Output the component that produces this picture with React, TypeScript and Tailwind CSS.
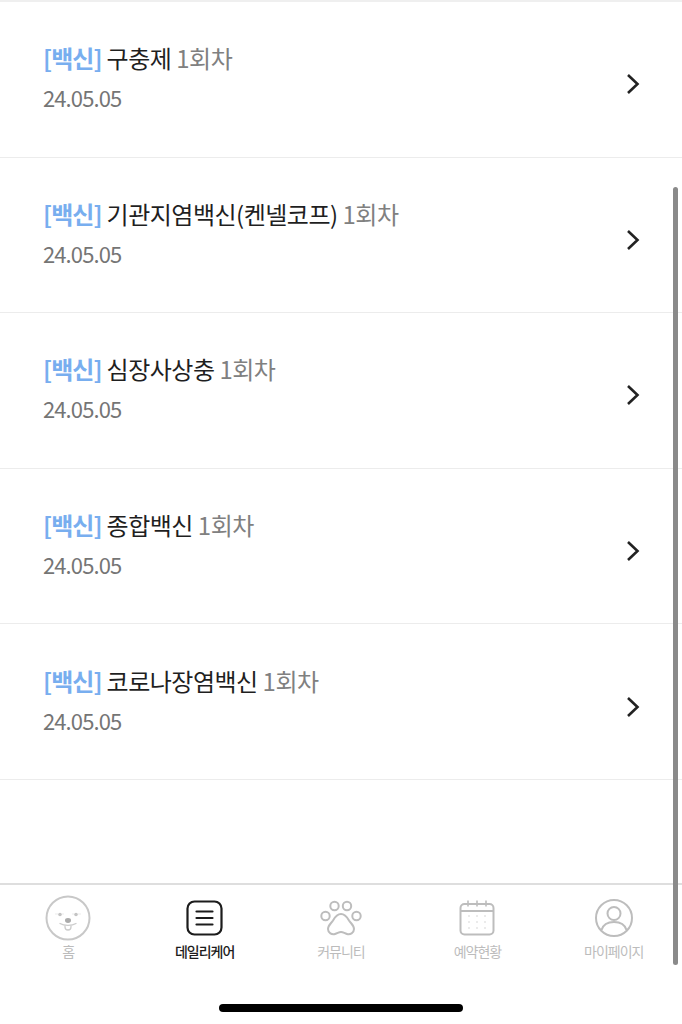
const rows = ["구충제", "기관지염백신(켄넬코프)", "심장사상충", "종합백신", "코로나장염백신"];

function HomeIcon() {
  return (
    <svg width="46" height="46" viewBox="0 0 46 46" fill="none">
      <circle cx="23" cy="23" r="21.500" stroke="#c8c8c8" strokeWidth="2" />
      <circle cx="15" cy="19.500" r="1.800" fill="#c4c4c4" />
      <circle cx="31" cy="19.500" r="1.800" fill="#c4c4c4" />
      <path d="M10 19h3M17 19h2M27 19h2M33 19h3" stroke="#ebebeb" strokeWidth="1" />
      <ellipse cx="23" cy="25.500" rx="3" ry="2.400" fill="#ababab" />
      <path d="M15 28.500c4 2.500 12 2.500 16 0" stroke="#cccccc" strokeWidth="1.300" strokeLinecap="round" />
      <path d="M20 30.500v1.500a3 3 0 0 0 6 0v-1.500" stroke="#cccccc" strokeWidth="1.300" />
    </svg>
  );
}

function CareIcon() {
  return (
    <svg width="38" height="36" viewBox="0 0 38 36" fill="none" stroke="#1c1c1c">
      <rect x="1.500" y="1.500" width="34" height="33" rx="7" strokeWidth="2.200" />
      <path d="M10.500 11.500h16M10.500 18h16M10.500 24.500h16" strokeWidth="2.200" strokeLinecap="round" />
    </svg>
  );
}

function PawIcon() {
  return (
    <svg width="44" height="36" viewBox="0 0 44 36" fill="none" stroke="#bdbdbd" strokeWidth="2">
      <circle cx="6.500" cy="16" r="4.200" />
      <circle cx="15.500" cy="6" r="4.200" />
      <circle cx="28" cy="6" r="4.200" />
      <circle cx="37.500" cy="16" r="4.200" />
      <path d="M22 14c-4 0-6 3-8 6.500-2 3-5 5-5 8.500 0 4 4 6 7 5 3-1 4-2 6-2s3 1 6 2c3 1 7-1 7-5 0-3.500-3-5.500-5-8.500-2-3.500-4-6.500-8-6.500z" />
    </svg>
  );
}

function CalendarIcon() {
  const dots = [];
  for (let y = 16; y <= 28; y += 6) {
    for (let x = 10; x <= 26; x += 8) {
      dots.push(<circle key={`${x}-${y}`} cx={x} cy={y} r="0.800" fill="#d2d2d2" stroke="none" />);
    }
  }
  return (
    <svg width="36" height="36" viewBox="0 0 36 36" fill="none" stroke="#bdbdbd" strokeWidth="2">
      <rect x="1.500" y="4" width="33" height="30.500" rx="4" />
      <path d="M1.500 11h33" />
      <path d="M9 0.500v6M18 0.500v6M27 0.500v6" strokeWidth="1.600" />
      {dots}
    </svg>
  );
}

function MyIcon() {
  return (
    <svg width="40" height="40" viewBox="0 0 40 40" fill="none" stroke="#bdbdbd" strokeWidth="2">
      <circle cx="20" cy="20" r="18" />
      <circle cx="20" cy="15.500" r="6.500" />
      <path d="M7.500 32c1.500-5 6-8 12.500-8s11 3 12.500 8" />
    </svg>
  );
}

const tabs = [
  { label: "홈", icon: <HomeIcon />, active: false },
  { label: "데일리케어", icon: <CareIcon />, active: true },
  { label: "커뮤니티", icon: <PawIcon />, active: false },
  { label: "예약현황", icon: <CalendarIcon />, active: false },
  { label: "마이페이지", icon: <MyIcon />, active: false },
];

export default function App() {
  return (
    <div className="relative flex h-[1024px] w-[682px] flex-col overflow-hidden bg-white font-['Noto_Sans_CJK_KR','Noto_Sans',sans-serif]">
      <div className="h-[2px] bg-[#efefef]" />
      <div className="flex-1">
        {rows.map((name) => (
          <div key={name} className="flex h-[155.600px] items-center justify-between border-b border-[#ececec] pl-[43px] pr-[42px]">
            <div className="flex flex-col gap-[10px] pb-[4px]">
              <p className="text-[24px] leading-[30px] tracking-[-0.500px] text-[#1f1f1f]">
                <span className="font-bold tracking-[-0.900px] text-[#78aeef]">[백신]</span> {name}{" "}
                <span className="text-[#808080]">1회차</span>
              </p>
              <p className="text-[22px] leading-[28px] tracking-[-0.900px] text-[#757575]">24.05.05</p>
            </div>
            <svg className="mt-[10px]" width="14" height="22" viewBox="0 0 14 22" fill="none" stroke="#222222" strokeWidth="2.600">
              <path d="M2 2l9.500 9L2 20" />
            </svg>
          </div>
        ))}
      </div>
      <nav className="h-[141px] border-t-2 border-[#dedede]">
        <div className="grid grid-cols-5 pt-[10px]">
          {tabs.map((tab) => (
            <div key={tab.label} className="flex flex-col items-center">
              <div className="flex h-[46px] items-center justify-center">{tab.icon}</div>
              <span
                className={`text-[14px] leading-[20px] tracking-[-1px] ${
                  tab.active ? "font-medium text-[#1c1c1c]" : "text-[#bcbcbc]"
                }`}
              >
                {tab.label}
              </span>
            </div>
          ))}
        </div>
      </nav>
      <div className="absolute bottom-[12px] left-[219px] h-[8px] w-[244px] rounded-full bg-black" />
      <div className="absolute left-[673px] top-[187px] h-[778px] w-[5px] rounded-full bg-[#8a8a8a]" />
    </div>
  );
}
